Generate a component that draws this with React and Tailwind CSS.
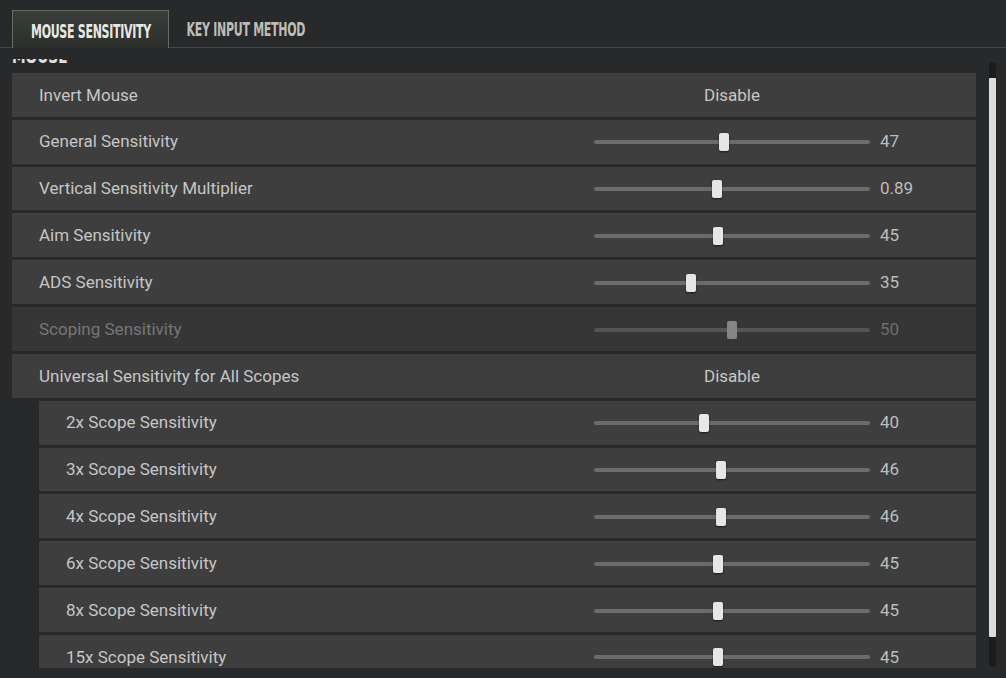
import React from "react";

const rows = [
  { label: "Invert Mouse", toggle: "Disable" },
  { label: "General Sensitivity", value: "47", pct: 47 },
  { label: "Vertical Sensitivity Multiplier", value: "0.89", pct: 44.5 },
  { label: "Aim Sensitivity", value: "45", pct: 45 },
  { label: "ADS Sensitivity", value: "35", pct: 35 },
  { label: "Scoping Sensitivity", value: "50", pct: 50, disabled: true },
  { label: "Universal Sensitivity for All Scopes", toggle: "Disable" },
  { label: "2x Scope Sensitivity", value: "40", pct: 40, sub: true },
  { label: "3x Scope Sensitivity", value: "46", pct: 46, sub: true },
  { label: "4x Scope Sensitivity", value: "46", pct: 46, sub: true },
  { label: "6x Scope Sensitivity", value: "45", pct: 45, sub: true },
  { label: "8x Scope Sensitivity", value: "45", pct: 45, sub: true },
  { label: "15x Scope Sensitivity", value: "45", pct: 45, sub: true },
];

const condensed = { fontFamily: "'DejaVu Sans Condensed', 'DejaVu Sans', sans-serif" };

function Slider({ pct, disabled }) {
  return (
    <div className="relative h-[18px] w-[276px] flex items-center">
      <div className={`h-[4px] w-full rounded-full ${disabled ? "bg-[#545454]" : "bg-[#6c6c6c]"}`} />
      <div
        className={`absolute top-0 h-[18px] w-[10px] -ml-[5px] rounded-[2px] ${
          disabled ? "bg-[#858585]" : "bg-[#e6e6e6] shadow-[0_1px_2px_rgba(0,0,0,0.6)]"
        }`}
        style={{ left: `${pct}%` }}
      />
    </div>
  );
}

function SettingRow({ row }) {
  const { label, toggle, value, pct, disabled, sub } = row;
  return (
    <div
      className={`flex items-center h-[43.83px] mb-[3px] pt-px ${sub ? "ml-[27px] pl-[27px]" : "pl-[27px]"} ${
        disabled ? "bg-[#363636]" : "bg-[#3e3e3e]"
      }`}
    >
      <div className={`flex-1 text-[17px] ${disabled ? "text-[#767676]" : "text-[#c6c6c6]"}`}>{label}</div>
      <div className="w-[382px] flex items-center">
        {toggle ? (
          <div className="w-[276px] text-center text-[17px] text-[#c6c6c6]">{toggle}</div>
        ) : (
          <>
            <Slider pct={pct} disabled={disabled} />
            <div className={`ml-[10px] text-[17px] ${disabled ? "text-[#6e6e6e]" : "text-[#bdbdbd]"}`}>{value}</div>
          </>
        )}
      </div>
    </div>
  );
}

export default function App() {
  return (
    <div
      className="w-[1006px] h-[678px] bg-[#28292b] flex flex-col overflow-hidden"
      style={{ fontFamily: "Roboto, 'Noto Sans', sans-serif" }}
    >
      <div className="flex items-end pt-[10px] pl-[12px] border-b border-[#45464a] h-[48px]">
        <div className="h-[38px] w-[157px] -mb-px border border-[#6a6b64] border-b-0 bg-gradient-to-b from-[#3a3e39] to-[#2c2e2c] flex items-center justify-center pt-[3px]">
          <span
            className="inline-block text-[19px] font-bold text-[#e8e8e2] scale-x-[0.645] whitespace-nowrap tracking-tight"
            style={condensed}
          >
            MOUSE SENSITIVITY
          </span>
        </div>
        <div className="h-[38px] w-[154px] flex items-center justify-center pt-[3px]">
          <span
            className="inline-block text-[19px] font-bold text-[#bdbdb7] scale-x-[0.645] whitespace-nowrap tracking-tight"
            style={condensed}
          >
            KEY INPUT METHOD
          </span>
        </div>
      </div>

      <div className="flex mt-[11px]">
        <div className="ml-[12px] w-[964px] h-[609px] overflow-hidden">
          <div className="-mt-[14px]">
            <div className="h-[28px] text-[19px] font-bold text-[#e0e0e0] leading-[22px]" style={condensed}>
              <span className="inline-block scale-x-[0.8] origin-left">MOUSE</span>
            </div>
            {rows.map((r) => (
              <SettingRow key={r.label} row={r} />
            ))}
          </div>
        </div>
        <div className="ml-[13px] mt-[3px] w-[7px] h-[605px] rounded-full bg-[#1c1c1d] flex flex-col pt-[16px] pb-[30px]">
          <div className="flex-1 bg-[#dcdcdc] rounded-[1px]" />
        </div>
      </div>
    </div>
  );
}
